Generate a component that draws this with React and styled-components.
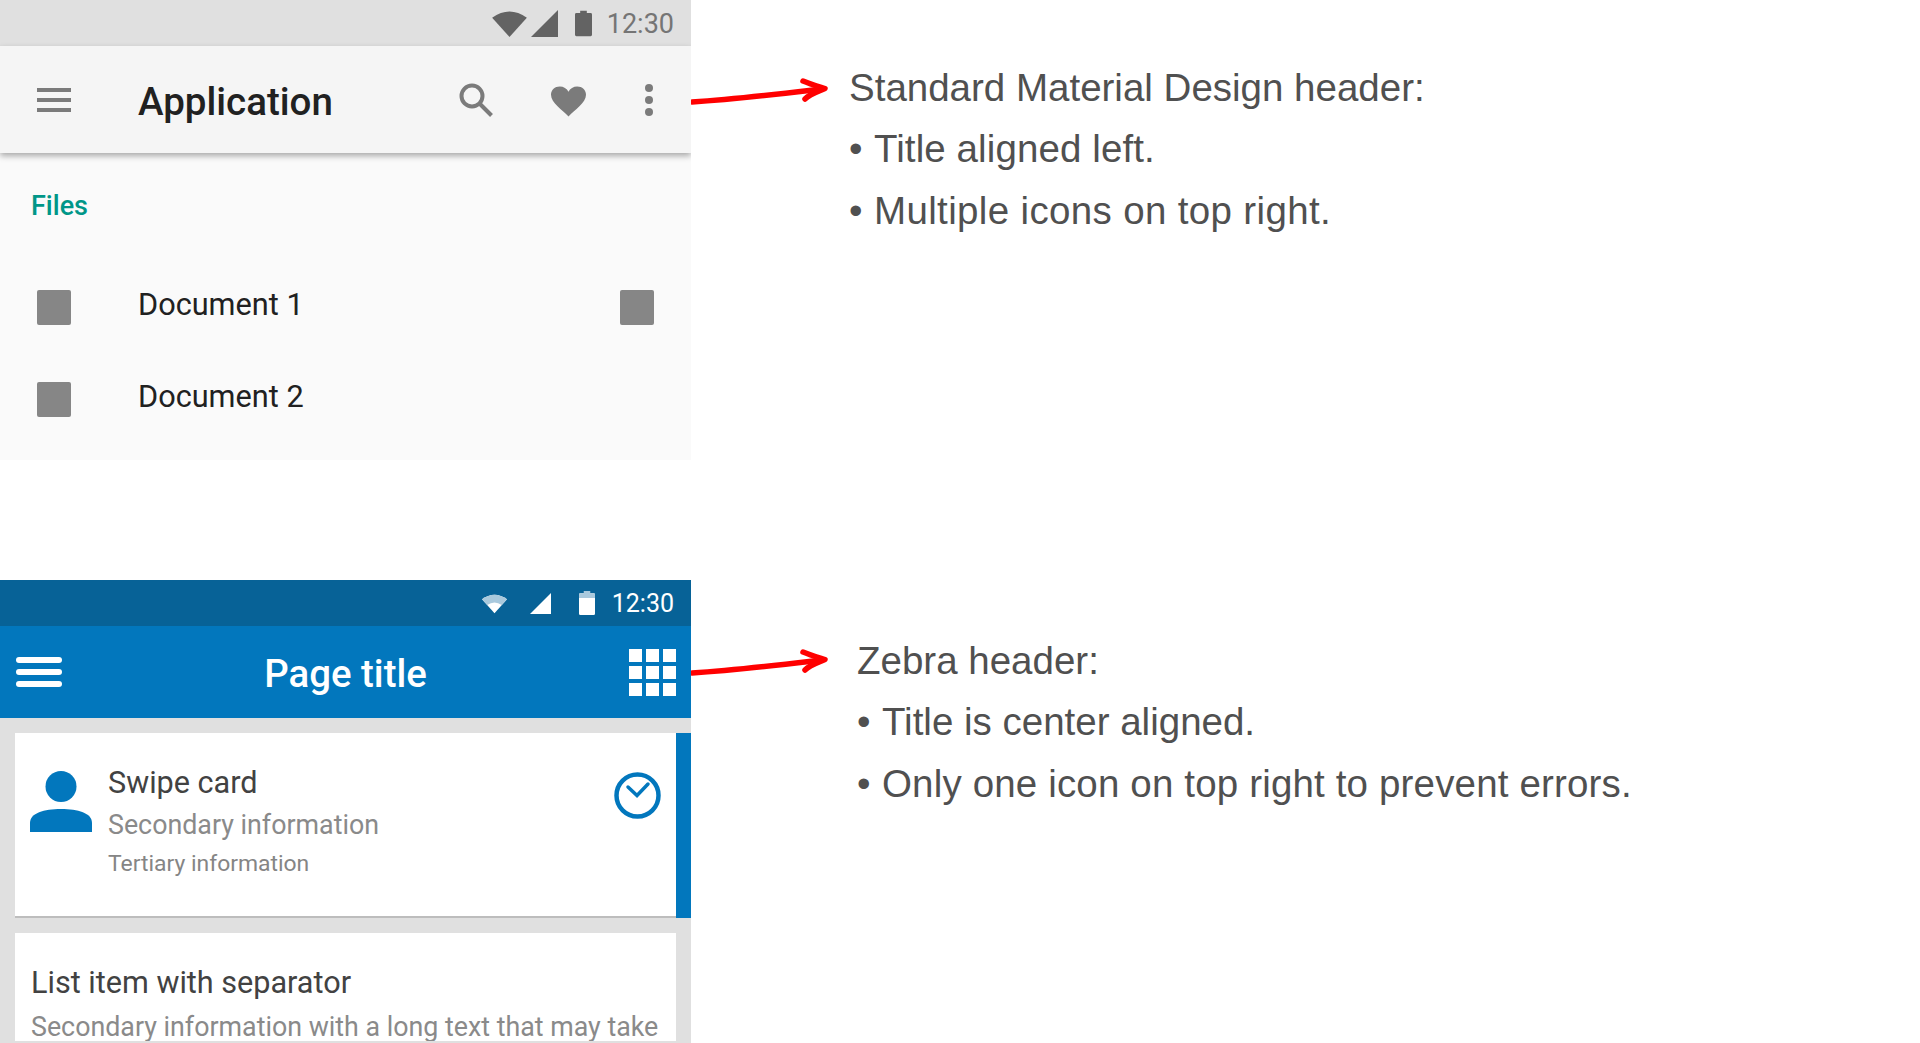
import React from "react";
import styled, { createGlobalStyle } from "styled-components";

const Global = createGlobalStyle`
  html, body { margin: 0; padding: 0; background: #fff; }
  body { font-family: Roboto, "Liberation Sans", sans-serif; }
`;

const Page = styled.div`
  width: 1920px;
  height: 1043px;
  overflow: hidden;
  display: flex;
  flex-direction: column;
  gap: 120px;
`;

const Row = styled.section`
  display: flex;
  flex: ${(p) => (p.$fill ? "1 1 0" : "0 0 460px")};
  min-height: 0;
`;

const Phone = styled.div`
  width: 691px;
  flex: none;
  display: flex;
  flex-direction: column;
  overflow: hidden;
  background: ${(p) => p.$bg};
`;

const StatusBar = styled.div`
  flex: 0 0 46px;
  background: ${(p) => p.$bg};
  color: ${(p) => p.$fg};
  display: flex;
  align-items: center;
  justify-content: flex-end;
  padding-right: 17px;
`;

const Clock = styled.span`
  font-size: ${(p) => p.$size}px;
  line-height: 30px;
  margin: 2px 0 0 ${(p) => p.$gap}px;
`;

const Icon = styled.svg`
  display: block;
  flex: none;
  margin-left: ${(p) => p.$ml || 0}px;
  margin-top: ${(p) => p.$mt || 0}px;
`;

const MaterialBar = styled.header`
  flex: 0 0 107px;
  background: #f5f5f5;
  box-shadow: 0 3px 6px rgba(0, 0, 0, 0.32);
  position: relative;
  display: flex;
  align-items: center;
  padding: 0 38px 0 37px;
`;

const MaterialTitle = styled.h1`
  margin: 3px 0 0 67px;
  font-size: 38.5px;
  font-weight: 500;
  color: #212121;
  flex: 1;
`;

const Files = styled.div`
  flex: 1;
  display: flex;
  flex-direction: column;
  padding: 36px 37px 0;
`;

const SubHeader = styled.div`
  font-size: 27px;
  line-height: 34px;
  font-weight: 500;
  color: #009688;
  margin: 0 0 67px -6px;
`;

const FileRow = styled.div`
  display: flex;
  align-items: center;
  height: 35px;
  margin-bottom: 57px;
`;

const FileIcon = styled.span`
  width: 34px;
  height: 35px;
  border-radius: 2px;
  background: #868686;
  flex: none;
`;

const FileName = styled.span`
  flex: 1;
  margin: -6px 0 0 67px;
  font-size: 30.7px;
  color: #212121;
`;

const ZebraBar = styled.header`
  flex: 0 0 92px;
  background: #0277bd;
  position: relative;
  display: flex;
  align-items: center;
  justify-content: space-between;
  padding: 0 15px 0 16px;
`;

const ZebraTitle = styled.h1`
  margin: 3px 0 0;
  font-size: 38.4px;
  font-weight: 500;
  color: #fff;
  position: absolute;
  left: 0;
  right: 0;
  text-align: center;
`;

const Burger = styled.div`
  width: 46px;
  display: flex;
  flex-direction: column;
  gap: 6px;
`;

const BurgerLine = styled.span`
  height: 6px;
  border-radius: 3px;
  background: #fff;
`;

const Grid = styled.div`
  display: grid;
  grid-template-columns: repeat(3, 13px);
  grid-template-rows: repeat(3, 13px);
  gap: 4px;
`;

const GridCell = styled.span`
  background: #fff;
`;

const Content = styled.div`
  flex: 1;
  min-height: 0;
  background: #e0e0e0;
  padding: 15px 0 2px 15px;
  display: flex;
  flex-direction: column;
  gap: 15px;
`;

const SwipeCard = styled.article`
  flex: 0 0 185px;
  display: flex;
  background: #fff;
  border-right: 15px solid #0277bd;
  box-sizing: border-box;
  position: relative;
`;

const Separator = styled.div`
  position: absolute;
  left: 0;
  right: 0;
  bottom: 0;
  height: 2px;
  background: #bdbdbd;
`;

const Avatar = styled.div`
  flex: 0 0 93px;
  padding: 38px 0 0 15px;
  box-sizing: border-box;
`;

const CardText = styled.div`
  flex: 1;
  padding-top: 32px;
`;

const PrimaryText = styled.div`
  font-size: 30.6px;
  line-height: 36px;
  color: #424242;
`;

const SecondaryText = styled.div`
  font-size: 26.8px;
  line-height: 36px;
  color: #8a8a8a;
  margin-top: ${(p) => p.$mt || 0}px;
  white-space: nowrap;
`;

const TertiaryText = styled.div`
  font-size: 22.9px;
  line-height: 30px;
  color: #858585;
  margin-top: 6px;
`;

const CardAction = styled.div`
  padding: 39px 15px 0 0;
`;

const ListCard = styled.article`
  flex: 1;
  min-height: 0;
  margin-right: 15px;
  background: #fff;
  overflow: hidden;
  padding: 32px 15px 0 16px;
`;

const Arrow = styled.svg`
  display: block;
  flex: none;
  width: 145px;
  height: 40px;
  margin: ${(p) => p.$top}px 0 0 -2px;
  overflow: visible;
`;

const Notes = styled.div`
  margin: ${(p) => p.$top}px 0 0 ${(p) => p.$left}px;
  font-family: "Liberation Sans", Arial, sans-serif;
  font-size: 38.5px;
  line-height: 61.4px;
  color: #505050;
  white-space: nowrap;
`;

const NoteLine = styled.div`
  letter-spacing: ${(p) => p.$ls || 0}px;
`;

const Bullet = styled.span`
  display: inline-block;
  width: 25px;
  letter-spacing: 0;
`;

const Wifi = ({ fill, top, w, h, ml }) => (
  <Icon viewBox="0 0 36 28" width={w} height={h} $ml={ml}>
    <path d="M18 28 L0 8 Q18 -5 36 8 Z" fill={fill} />
    {top && <path d="M7.500 16.300 L0 8 Q18 -5 36 8 L28.500 16.300 Q18 9 7.500 16.300 Z" fill={top} />}
  </Icon>
);

const Signal = ({ fill, w, h, ml }) => (
  <Icon viewBox="0 0 27 27" width={w} height={h} $ml={ml}>
    <path d="M0 27 L27 0 V27 Z" fill={fill} />
  </Icon>
);

const Battery = ({ fill, top, w, h, ml }) => (
  <Icon viewBox="0 0 18 27" width={w} height={h} $ml={ml}>
    <path d="M5.500 0 H12.500 V2.500 H16.500 Q18 2.500 18 4 V25.500 Q18 27 16.500 27 H1.500 Q0 27 0 25.500 V4 Q0 2.500 1.500 2.500 H5.500 Z" fill={fill} />
    {top && <path d="M5.500 0 H12.500 V2.500 H16.500 Q18 2.500 18 4 V8 H0 V4 Q0 2.500 1.500 2.500 H5.500 Z" fill={top} />}
  </Icon>
);

const MaterialMenu = () => (
  <Icon viewBox="0 0 34 24" width="34" height="24">
    <path d="M0 0H34V4H0ZM0 10H34V14H0ZM0 20H34V24H0Z" fill="#7b7b7b" />
  </Icon>
);

const Search = () => (
  <Icon viewBox="0 0 34 34" width="34" height="34">
    <circle cx="13" cy="13" r="10.500" fill="none" stroke="#7b7b7b" strokeWidth="4" />
    <path d="M21 21 L32.500 32.500" fill="none" stroke="#7b7b7b" strokeWidth="4" />
  </Icon>
);

const Heart = () => (
  <Icon viewBox="0 0 36 31" width="35" height="31" $ml={58} $mt={3}>
    <path d="M18 31 C12 24 0 17 0 8.500 C0 3.500 4 0 9 0 C13 0 16.300 2 18 5.500 C19.700 2 23 0 27 0 C32 0 36 3.500 36 8.500 C36 17 24 24 18 31 Z" fill="#7b7b7b" />
  </Icon>
);

const More = () => (
  <Icon viewBox="0 0 8 32" width="8" height="32" $ml={59}>
    <g fill="#7b7b7b">
      <circle cx="4" cy="4" r="4" />
      <circle cx="4" cy="16" r="4" />
      <circle cx="4" cy="28" r="4" />
    </g>
  </Icon>
);

const Person = () => (
  <Icon viewBox="0 0 62 62" width="62" height="62">
    <circle cx="31" cy="15.500" r="15.500" fill="#0277bd" />
    <path d="M0 61 V52 C0 42 14 38 31 38 C48 38 62 42 62 52 V61 Z" fill="#0277bd" />
  </Icon>
);

const ClockIcon = () => (
  <Icon viewBox="0 0 47 47" width="47" height="47">
    <circle cx="23.500" cy="23.500" r="21" fill="none" stroke="#0277bd" strokeWidth="4.500" />
    <path d="M14 15 L23 23.500 L34 12" fill="none" stroke="#0277bd" strokeWidth="3.500" strokeLinecap="round" />
  </Icon>
);

const RedArrow = ({ top }) => (
  <Arrow $top={top} viewBox="0 0 145 40">
    <path d="M3 26 C50 23 90 18 132 13" fill="none" stroke="#ff0000" strokeWidth="5.500" strokeLinecap="round" />
    <path d="M114 5 C121 8 128 10 136 12.500 C128 16 121 18 116 23" fill="none" stroke="#ff0000" strokeWidth="5.500" strokeLinecap="round" strokeLinejoin="round" />
  </Arrow>
);

export default function App() {
  return (
    <>
      <Global />
      <Page>
        <Row>
          <Phone $bg="#fafafa">
            <StatusBar $bg="#e0e0e0" $fg="#757575">
              <Wifi fill="#636363" w={35} h={27} />
              <Signal fill="#636363" w={27} h={27} ml={4} />
              <Battery fill="#636363" w={17} h={27} ml={17} />
              <Clock $size={27} $gap={15}>12:30</Clock>
            </StatusBar>
            <MaterialBar>
              <MaterialMenu />
              <MaterialTitle>Application</MaterialTitle>
              <Search />
              <Heart />
              <More />
            </MaterialBar>
            <Files>
              <SubHeader>Files</SubHeader>
              <FileRow>
                <FileIcon />
                <FileName>Document 1</FileName>
                <FileIcon />
              </FileRow>
              <FileRow>
                <FileIcon />
                <FileName>Document 2</FileName>
              </FileRow>
            </Files>
          </Phone>
          <RedArrow top={76} />
          <Notes $top={57} $left={15}>
            <NoteLine>Standard Material Design header:</NoteLine>
            <NoteLine $ls={0.1}><Bullet>•</Bullet>Title aligned left.</NoteLine>
            <NoteLine $ls={0.35}><Bullet>•</Bullet>Multiple icons on top right.</NoteLine>
          </Notes>
        </Row>
        <Row $fill>
          <Phone $bg="#e0e0e0">
            <StatusBar $bg="#076297" $fg="#ffffff">
              <Wifi fill="#ffffff" top="#a9c9dd" w={25} h={23} />
              <Signal fill="#ffffff" w={23} h={21} ml={22} />
              <Battery fill="#ffffff" top="#a9c9dd" w={16} h={26} ml={27} />
              <Clock $size={25} $gap={17}>12:30</Clock>
            </StatusBar>
            <ZebraBar>
              <Burger>
                <BurgerLine />
                <BurgerLine />
                <BurgerLine />
              </Burger>
              <ZebraTitle>Page title</ZebraTitle>
              <Grid>
                {Array.from({ length: 9 }).map((_, i) => (
                  <GridCell key={i} />
                ))}
              </Grid>
            </ZebraBar>
            <Content>
              <SwipeCard>
                <Avatar><Person /></Avatar>
                <CardText>
                  <PrimaryText>Swipe card</PrimaryText>
                  <SecondaryText $mt={6}>Secondary information</SecondaryText>
                  <TertiaryText>Tertiary information</TertiaryText>
                </CardText>
                <CardAction><ClockIcon /></CardAction>
                <Separator />
              </SwipeCard>
              <ListCard>
                <PrimaryText>List item with separator</PrimaryText>
                <SecondaryText $mt={8}>Secondary information with a long text that may take</SecondaryText>
              </ListCard>
            </Content>
          </Phone>
          <RedArrow top={67} />
          <Notes $top={50} $left={23}>
            <NoteLine>Zebra header:</NoteLine>
            <NoteLine><Bullet>•</Bullet>Title is center aligned.</NoteLine>
            <NoteLine $ls={0.16}><Bullet>•</Bullet>Only one icon on top right to prevent errors.</NoteLine>
          </Notes>
        </Row>
      </Page>
    </>
  );
}
